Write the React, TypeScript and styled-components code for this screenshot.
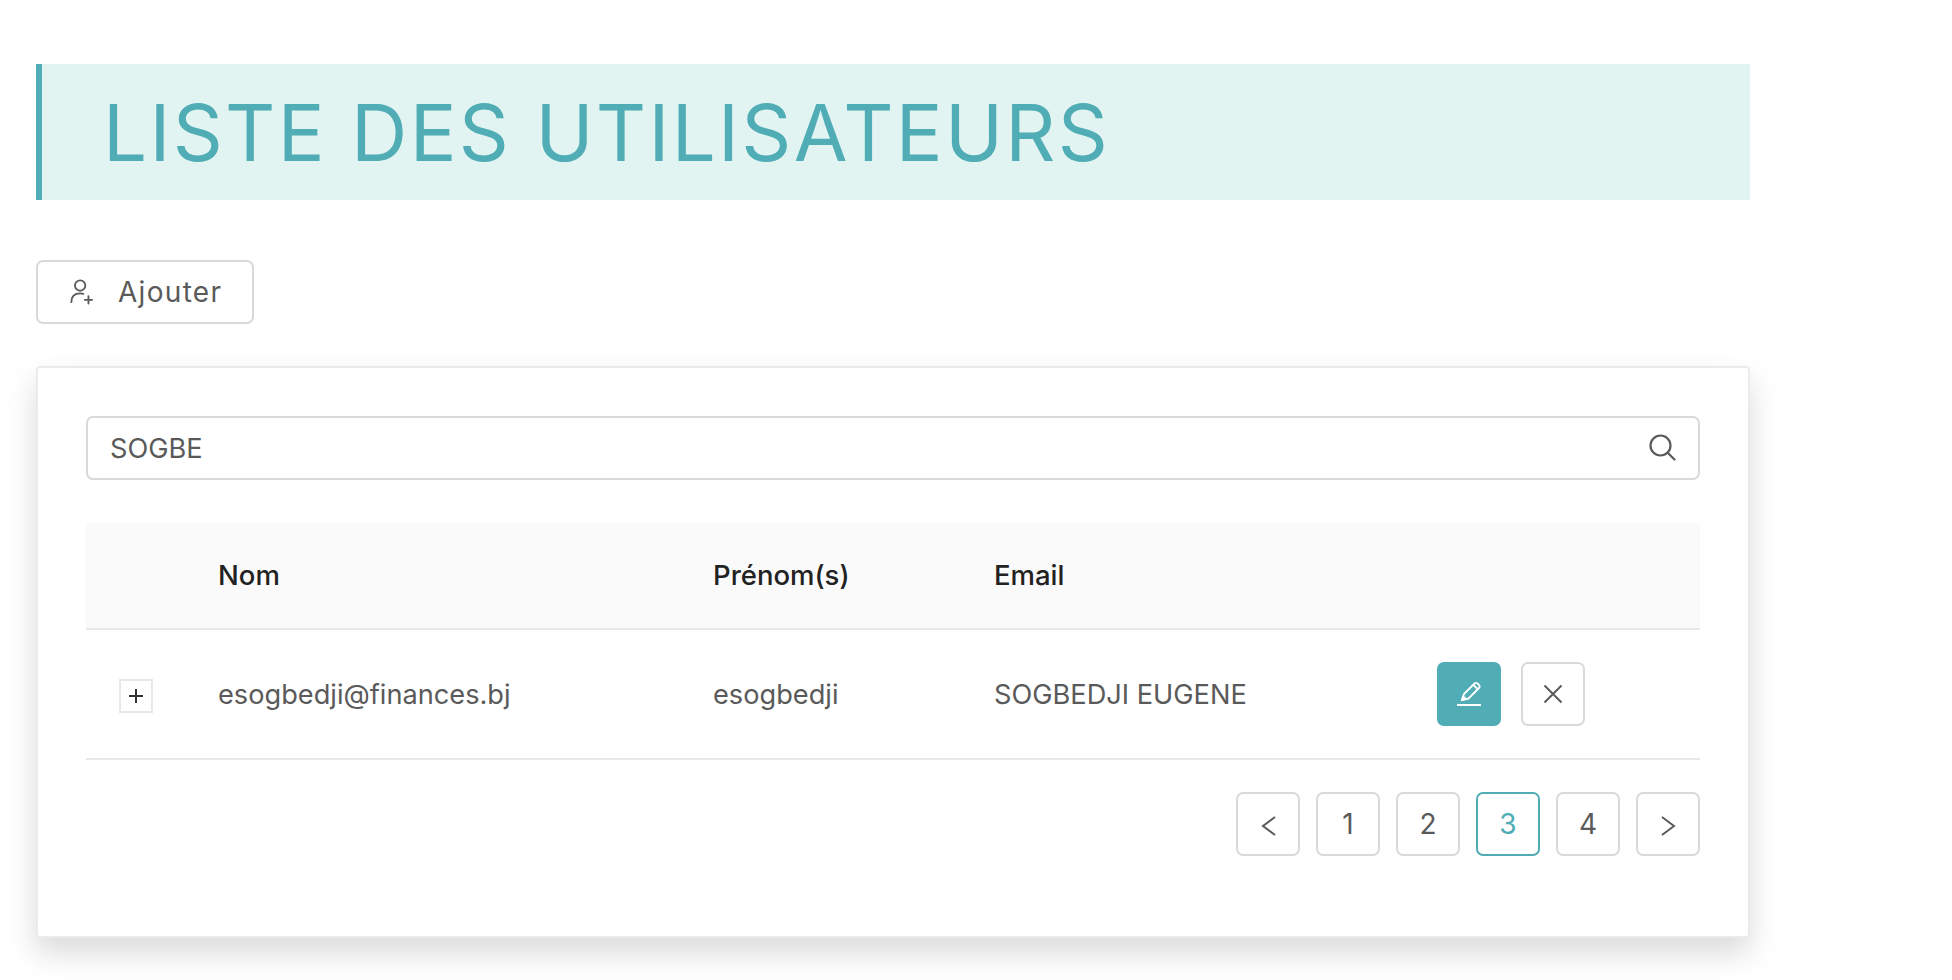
import React from 'react';
import styled, { createGlobalStyle } from 'styled-components';

const teal = '#50adb6';
const text = '#5a5a5a';
const line = '#e8e8e8';
const control = '#d9d9d9';

const GlobalStyle = createGlobalStyle`
  html, body {
    margin: 0;
    padding: 0;
    background: #fff;
  }
  * {
    box-sizing: border-box;
  }
`;

const Page = styled.div`
  width: 1714px;
  min-height: 980px;
  margin-left: 36px;
  padding-top: 64px;
  font-family: Inter, 'Liberation Sans', sans-serif;
  color: ${text};
`;

const Banner = styled.h1`
  display: flex;
  align-items: center;
  height: 136px;
  margin: 0;
  padding-left: 61px;
  border-left: 6px solid ${teal};
  background: #e2f4f2;
  color: ${teal};
  font-family: Inter, sans-serif;
  font-size: 78px;
  font-weight: 400;
  letter-spacing: 2.3px;
  white-space: nowrap;
`;

const AddButton = styled.button`
  display: flex;
  align-items: center;
  gap: 24px;
  width: 218px;
  height: 64px;
  margin-top: 60px;
  padding: 0 0 0 32px;
  border: 2px solid ${control};
  border-radius: 7px;
  background: #fff;
  color: ${text};
  font-family: Inter, sans-serif;
  font-size: 28px;
  font-weight: 400;
  letter-spacing: 1.3px;
`;

const Card = styled.section`
  height: 572px;
  margin-top: 42px;
  padding: 48px;
  border: 2px solid #ebebeb;
  border-radius: 4px;
  background: #fff;
  box-shadow: 0 15px 30px rgba(0, 0, 0, 0.15);
`;

const SearchBox = styled.div`
  display: flex;
  align-items: center;
  justify-content: space-between;
  height: 64px;
  padding: 0 22px;
  border: 2px solid ${control};
  border-radius: 7px;
  font-size: 27.2px;
`;

const UserTable = styled.table`
  width: 100%;
  margin-top: 42px;
  border-collapse: separate;
  border-spacing: 0;
  table-layout: fixed;
`;

const HeadCell = styled.th<{ $width?: number }>`
  width: ${(p) => (p.$width ? `${p.$width}px` : 'auto')};
  height: 108px;
  padding: 0;
  border-bottom: 2px solid ${line};
  background: #fafafa;
  color: #222;
  font-family: Inter, sans-serif;
  font-size: 27.5px;
  font-weight: 500;
  text-align: left;

  &:first-child {
    border-top-left-radius: 6px;
  }
  &:last-child {
    border-top-right-radius: 6px;
  }
`;

const Cell = styled.td`
  height: 130px;
  padding: 0;
  border-bottom: 2px solid ${line};
  font-size: 27.2px;
`;

const ExpandCell = styled(Cell)`
  padding: 4px 0 0 33px;
`;

const ExpandButton = styled.span`
  display: flex;
  align-items: center;
  justify-content: center;
  width: 34px;
  height: 34px;
  border: 2px solid ${line};
  color: #333;
`;

const Actions = styled.div`
  display: flex;
  gap: 20px;
`;

const SquareButton = styled.button<{ $active?: boolean; $primary?: boolean }>`
  display: flex;
  align-items: center;
  justify-content: center;
  width: 64px;
  height: 64px;
  padding: 0;
  border: 2px solid ${(p) => (p.$primary ? teal : p.$active ? teal : control)};
  border-radius: 7px;
  background: ${(p) => (p.$primary ? teal : '#fff')};
  color: ${(p) => (p.$primary ? '#fff' : p.$active ? teal : text)};
  font-family: Inter, 'Liberation Sans', sans-serif;
  font-size: 28px;
`;

const Pagination = styled.nav`
  display: flex;
  justify-content: flex-end;
  gap: 16px;
  margin-top: 32px;
`;

const pages = [1, 2, 3, 4];

export default function App() {
  return (
    <Page>
      <GlobalStyle />
      <Banner>LISTE DES UTILISATEURS</Banner>
      <AddButton>
        <svg width="24" height="26" viewBox="0 0 26 28" fill="none" stroke="currentColor" strokeWidth="2" strokeLinecap="round">
          <circle cx="11" cy="7" r="5.6" />
          <path d="M1.5 25c0-5.5 3-9.5 9.5-9.5 1.5 0 2.5.2 3.5.5" />
          <path d="M20 18.5v8M16 22.5h8" />
        </svg>
        Ajouter
      </AddButton>
      <Card>
        <SearchBox>
          SOGBE
          <svg width="28" height="28" viewBox="0 0 28 28" fill="none" stroke={text} strokeWidth="2.2" strokeLinecap="round">
            <circle cx="12.5" cy="11.5" r="10" />
            <path d="M20 19l6.5 6.5" />
          </svg>
        </SearchBox>
        <UserTable>
          <thead>
            <tr>
              <HeadCell $width={132} />
              <HeadCell $width={495}>Nom</HeadCell>
              <HeadCell $width={281}>Prénom(s)</HeadCell>
              <HeadCell $width={443}>Email</HeadCell>
              <HeadCell />
            </tr>
          </thead>
          <tbody>
            <tr>
              <ExpandCell>
                <ExpandButton>
                  <svg width="18" height="18" viewBox="0 0 18 18" stroke="currentColor" strokeWidth="2">
                    <path d="M9 2v14M2 9h14" />
                  </svg>
                </ExpandButton>
              </ExpandCell>
              <Cell>esogbedji@finances.bj</Cell>
              <Cell>esogbedji</Cell>
              <Cell>SOGBEDJI EUGENE</Cell>
              <Cell>
                <Actions>
                  <SquareButton $primary aria-label="Modifier">
                    <svg width="26" height="26" viewBox="0 0 26 26" fill="none" stroke="currentColor" strokeWidth="1.8">
                      <path d="M6 19l2-6L18.5 2.5a2 2 0 0 1 3 0l1.5 1.5a2 2 0 0 1 0 3L12.5 17.5z" strokeLinejoin="round" />
                      <path d="M6 19l1.2-3.6 2.6 2.6z" fill="currentColor" />
                      <path d="M17.5 4l4 4" />
                      <path d="M1 24h24" strokeWidth="2" />
                    </svg>
                  </SquareButton>
                  <SquareButton aria-label="Supprimer">
                    <svg width="20" height="20" viewBox="0 0 20 20" stroke="currentColor" strokeWidth="2">
                      <path d="M1.5 1.5l17 17M18.5 1.5l-17 17" />
                    </svg>
                  </SquareButton>
                </Actions>
              </Cell>
            </tr>
          </tbody>
        </UserTable>
        <Pagination>
          <SquareButton aria-label="Précédent">
            <svg width="16" height="24" viewBox="0 0 16 24" fill="none" stroke="currentColor" strokeWidth="2">
              <path d="M15 5L3 14l12 9" />
            </svg>
          </SquareButton>
          {pages.map((n) => (
            <SquareButton key={n} $active={n === 3}>
              {n}
            </SquareButton>
          ))}
          <SquareButton aria-label="Suivant">
            <svg width="16" height="24" viewBox="0 0 16 24" fill="none" stroke="currentColor" strokeWidth="2">
              <path d="M2 5l12 9-12 9" />
            </svg>
          </SquareButton>
        </Pagination>
      </Card>
    </Page>
  );
}
